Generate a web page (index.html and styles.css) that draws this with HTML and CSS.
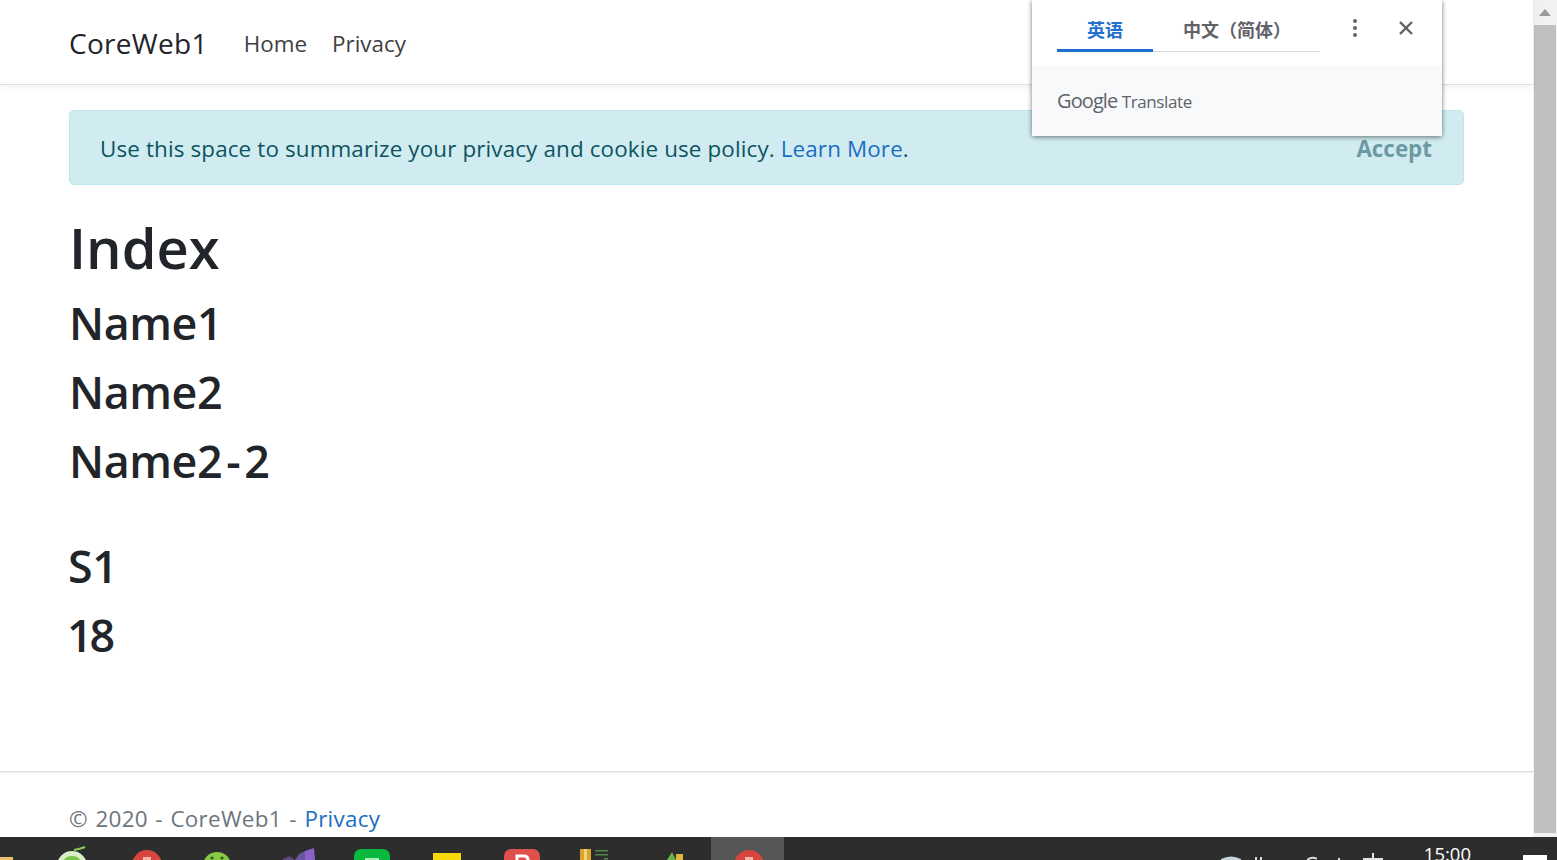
FILE: index.html
```html
<!DOCTYPE html>
<html>
<head>
    <meta charset="utf-8">
    <title>CoreWeb1</title>
    <link rel="stylesheet" href="styles.css">
</head>
<body>
    <div class="screen">
        <div class="browser">
            <div class="page">
                <header class="navbar">
                    <a class="brand">CoreWeb1</a>
                    <nav class="nav-links">
                        <a>Home</a>
                        <a>Privacy</a>
                    </nav>
                </header>

                <main class="content">
                    <div class="cookie-alert">
                        <span>Use this space to summarize your privacy and cookie use policy. <a class="link">Learn More</a>.</span>
                        <button class="accept">Accept</button>
                    </div>
                    <h1>Index</h1>
                    <h2>Name1</h2>
                    <h2>Name2</h2>
                    <h2>Name2<span class="dash">-</span>2</h2>
                    <h2 class="section-start">S1</h2>
                    <h2 class="age">18</h2>
                </main>

                <footer class="footer">
                    © 2020 - CoreWeb1 - <a class="link">Privacy</a>
                </footer>

                <!-- translate popup sits over the page -->
                <div class="translate-popup">
                    <div class="translate-top">
                        <div class="tabs">
                            <span class="tab active">英语</span>
                            <span class="tab">中文（简体）</span>
                        </div>
                        <svg class="more" width="6" height="20" viewBox="0 0 6 20" fill="#5f6368">
                            <circle cx="3" cy="3" r="2"></circle>
                            <circle cx="3" cy="10" r="2"></circle>
                            <circle cx="3" cy="17" r="2"></circle>
                        </svg>
                        <svg class="close" width="14" height="14" viewBox="0 0 14 14" fill="none" stroke="#5f6368" stroke-width="2.4">
                            <line x1="1" y1="1" x2="13" y2="13"></line>
                            <line x1="13" y1="1" x2="1" y2="13"></line>
                        </svg>
                    </div>
                    <div class="translate-bottom"><span class="google">Google</span> <span class="translate-word">Translate</span></div>
                </div>
            </div>

            <div class="scrollbar">
                <div class="scroll-up"><svg width="12" height="7" viewBox="0 0 12 7" fill="#9a9a9a"><polygon points="6 0 12 7 0 7"></polygon></svg></div>
                <div class="scroll-thumb"></div>
            </div>
        </div>

        <div class="taskbar">
            <div class="task-icons">
                <svg class="ti ti-files" width="13" height="23" viewBox="0 0 13 23"><rect x="0" y="20" width="13" height="3" fill="#e8c070"></rect></svg>
                <svg class="ti ti-apple" width="34" height="23" viewBox="0 0 34 23"><circle cx="16" cy="29" r="15" fill="#d8efc8"></circle><circle cx="16" cy="30" r="11" fill="#7cc34a"></circle><path d="M18 13 Q24 12 29 10" stroke="#8ccf50" stroke-width="2" fill="none"></path></svg>
                <svg class="ti ti-red" width="32" height="23" viewBox="0 0 32 23"><circle cx="16" cy="28" r="15" fill="#d8453c"></circle><rect x="12" y="20" width="8" height="3" fill="#f2b8b0"></rect></svg>
                <svg class="ti ti-smile" width="28" height="23" viewBox="0 0 28 23"><circle cx="14" cy="29" r="14" fill="#86c943"></circle><circle cx="9" cy="21" r="1.6" fill="#2f5a12"></circle><circle cx="19" cy="21" r="1.6" fill="#2f5a12"></circle></svg>
                <svg class="ti ti-studio" width="36" height="23" viewBox="0 0 36 23"><path d="M1 23 L8 19 L14 23 Z" fill="#5c4a80"></path><path d="M14 23 L18 17 L24 14 L24 23 Z" fill="#6d54a0"></path><path d="M24 14 L33 11 L34 23 L24 23 Z" fill="#8a63c8"></path></svg>
                <svg class="ti ti-chat" width="36" height="23" viewBox="0 0 36 23"><rect x="0" y="12" width="36" height="30" rx="7" fill="#09b83e"></rect><rect x="11" y="21" width="14" height="2" fill="#a9ecbd"></rect></svg>
                <svg class="ti ti-note" width="28" height="23" viewBox="0 0 28 23"><rect x="0" y="16" width="28" height="7" fill="#f7d90a"></rect></svg>
                <svg class="ti ti-ppt" width="36" height="23" viewBox="0 0 36 23"><rect x="0" y="12" width="36" height="30" rx="7" fill="#e0504a"></rect><path d="M13 23 V19 H20 Q24 19 24 23" fill="none" stroke="#fff" stroke-width="3"></path></svg>
                <svg class="ti ti-db" width="34" height="23" viewBox="0 0 34 23"><rect x="0" y="12" width="11" height="11" fill="#d9a52c"></rect><rect x="4" y="12" width="3" height="11" fill="#f3d27a"></rect><rect x="15" y="13" width="13" height="1.5" fill="#4f8a4a"></rect><rect x="15" y="17" width="13" height="1.5" fill="#4f8a4a"></rect><rect x="24" y="21" width="4" height="1.5" fill="#4f8a4a"></rect></svg>
                <svg class="ti ti-tree" width="24" height="23" viewBox="0 0 24 23"><path d="M3 23 L8 15 L12 23 Z" fill="#6fb544"></path><rect x="12" y="17" width="7" height="6" fill="#e0b93c"></rect></svg>
                <div class="task-active"><svg width="32" height="23" viewBox="0 0 32 23"><circle cx="17" cy="28" r="15" fill="#d8453c"></circle><rect x="13" y="20" width="8" height="3" fill="#f2b8b0"></rect></svg></div>
            </div>
            <div class="tray">
                <svg class="tray-shield" width="22" height="23" viewBox="0 0 22 23"><path d="M1 22 Q11 17 21 22 V23 H1 Z" fill="#c9d3da"></path></svg>
                <svg class="tray-signal" width="8" height="23" viewBox="0 0 8 23" fill="#ddd"><rect x="0" y="20" width="2" height="3"></rect><rect x="5" y="20" width="2" height="3"></rect></svg>
                <svg class="tray-wifi" width="10" height="23" viewBox="0 0 10 23" fill="none" stroke="#ddd" stroke-width="2"><path d="M0 23 Q5 19 10 22"></path></svg>
                <svg class="tray-vol" width="4" height="23" viewBox="0 0 4 23" fill="#ddd"><rect x="1" y="21" width="2" height="2"></rect></svg>
                <svg class="tray-ime" width="22" height="23" viewBox="0 0 22 23" fill="none" stroke="#e6e6e6" stroke-width="2"><path d="M11 16v7M1 22h20"></path></svg>
                <span class="clock">15:00</span>
                <span class="notify"></span>
            </div>
        </div>
    </div>
</body>
</html>
```

FILE: styles.css
```css
* {
    box-sizing: border-box;
}

html, body {
    margin: 0;
    padding: 0;
    height: 100%;
    overflow: hidden;
}

body {
    background: #fff;
    color: #212529;
    font-family: "Open Sans", "Noto Sans CJK SC", sans-serif;
}

.screen {
    width: 1557px;
    height: 860px;
    display: flex;
    flex-direction: column;
}

.browser {
    height: 837px;
    display: flex;
}

.page {
    position: relative;
    flex: 1;
    display: flex;
    flex-direction: column;
    min-width: 0;
}

/* nav */
.navbar {
    height: 85px;
    padding: 2px 69px 0;
    display: flex;
    align-items: center;
    gap: 36px;
    border-bottom: 1px solid #dfdfdf;
    box-shadow: 0 3px 8px rgba(0, 0, 0, 0.05);
}

.brand {
    font-size: 28px;
    color: #212529;
    letter-spacing: 0.3px;
}

.nav-links {
    display: flex;
    gap: 25px;
    font-size: 22.4px;
    color: #3f3f3f;
}

/* main */
.content {
    flex: 1;
    padding: 25px 69px 0;
}

.cookie-alert {
    width: 1395px;
    height: 75px;
    padding: 2px 31px 0 30px;
    display: flex;
    align-items: center;
    justify-content: space-between;
    background: #d1ecf1;
    border: 1px solid #bee5eb;
    border-radius: 5px;
    color: #0c5460;
    font-size: 22.4px;
    letter-spacing: 0.14px;
}

.link {
    color: #1b6ec2;
}

.accept {
    padding: 0;
    background: none;
    border: none;
    color: #6d9aa2;
    font-family: inherit;
    font-size: 22.4px;
    font-weight: 700;
}

h1, h2 {
    margin: 0;
    font-weight: 600;
    color: #212529;
}

h1 {
    margin-top: 26px;
    font-size: 56px;
    line-height: 72px;
}

h2 {
    font-size: 44.8px;
    line-height: 54px;
    margin-top: 15px;
    letter-spacing: -0.4px;
}

h1 + h2 {
    margin-top: 13px;
}

.dash {
    margin: 0 4px;
}

.section-start {
    margin-top: 51px;
    margin-left: -1px;
}

.age {
    margin-left: -2px;
    letter-spacing: -3px;
}

/* footer */
.footer {
    height: 66px;
    padding: 32px 69px 0;
    border-top: 1px solid #dedede;
    box-shadow: inset 0 1px 0 #f2f2f2;
    color: #6c757d;
    font-size: 22.4px;
    line-height: 30px;
    letter-spacing: 0.3px;
    word-spacing: 1.4px;
}

/* translate popup */
.translate-popup {
    position: absolute;
    top: 0;
    left: 1032px;
    width: 410px;
    height: 136px;
    background: #fff;
    border-radius: 0 0 2px 2px;
    box-shadow: 0 1px 5px rgba(0, 0, 0, 0.55);
    display: flex;
    flex-direction: column;
}

.translate-top {
    height: 66px;
    padding: 0 29px 0 25px;
    display: flex;
    align-items: flex-start;
}

.tabs {
    width: 263px;
    height: 52px;
    display: flex;
    border-bottom: 1px solid #dadce0;
}

.tab {
    height: 52px;
    padding-top: 18px;
    font-size: 18px;
    line-height: 25px;
    font-weight: 700;
    color: #5f6368;
}

.tab:last-child {
    padding-left: 30px;
}

.tab.active {
    width: 96px;
    text-align: center;
    color: #2470cf;
    border-bottom: 3px solid #1a6fd0;
}

.more {
    margin: 18px 0 0 32px;
}

.close {
    margin: 21px 0 0 41px;
}

.translate-bottom {
    flex: 1;
    background: #f8f9fa;
    padding: 23px 25px 0;
    color: #5f6368;
    font-size: 17px;
    line-height: 24px;
}

.google {
    font-size: 20px;
    letter-spacing: -0.9px;
}

.translate-word {
    letter-spacing: -0.4px;
}

/* scrollbar */
.scrollbar {
    width: 24px;
    background: #f1f1f1;
    display: flex;
    flex-direction: column;
    padding: 0 1px;
}

.scroll-up {
    height: 25px;
    display: flex;
    align-items: center;
    justify-content: center;
}

.scroll-thumb {
    flex: 1;
    margin-bottom: 4px;
    background: #c0c0c0;
}

/* taskbar */
.taskbar {
    height: 23px;
    background: #2d2d2d;
    display: flex;
    justify-content: space-between;
    overflow: hidden;
}

.task-icons {
    display: flex;
    align-items: flex-end;
}

.ti {
    flex-shrink: 0;
}

.ti-apple { margin-left: 43px; }
.ti-red { margin-left: 41px; }
.ti-smile { margin-left: 40px; }
.ti-studio { margin-left: 50px; }
.ti-chat { margin-left: 37px; }
.ti-note { margin-left: 43px; }
.ti-ppt { margin-left: 43px; }
.ti-db { margin-left: 40px; }
.ti-tree { margin-left: 50px; }

.task-active {
    width: 73px;
    height: 23px;
    margin-left: 23px;
    background: #565656;
    display: flex;
    justify-content: center;
}

.tray {
    display: flex;
    align-items: flex-start;
    padding-right: 10px;
}

.tray-signal { margin-left: 13px; }
.tray-wifi { margin-left: 44px; }
.tray-vol { margin-left: 20px; }
.tray-ime { margin-left: 21px; }

.clock {
    margin: 10px 0 0 40px;
    color: #fff;
    font-size: 18.5px;
    line-height: 13px;
}

.notify {
    width: 24px;
    height: 5px;
    margin: 18px 0 0 52px;
    background: #fff;
}
```
